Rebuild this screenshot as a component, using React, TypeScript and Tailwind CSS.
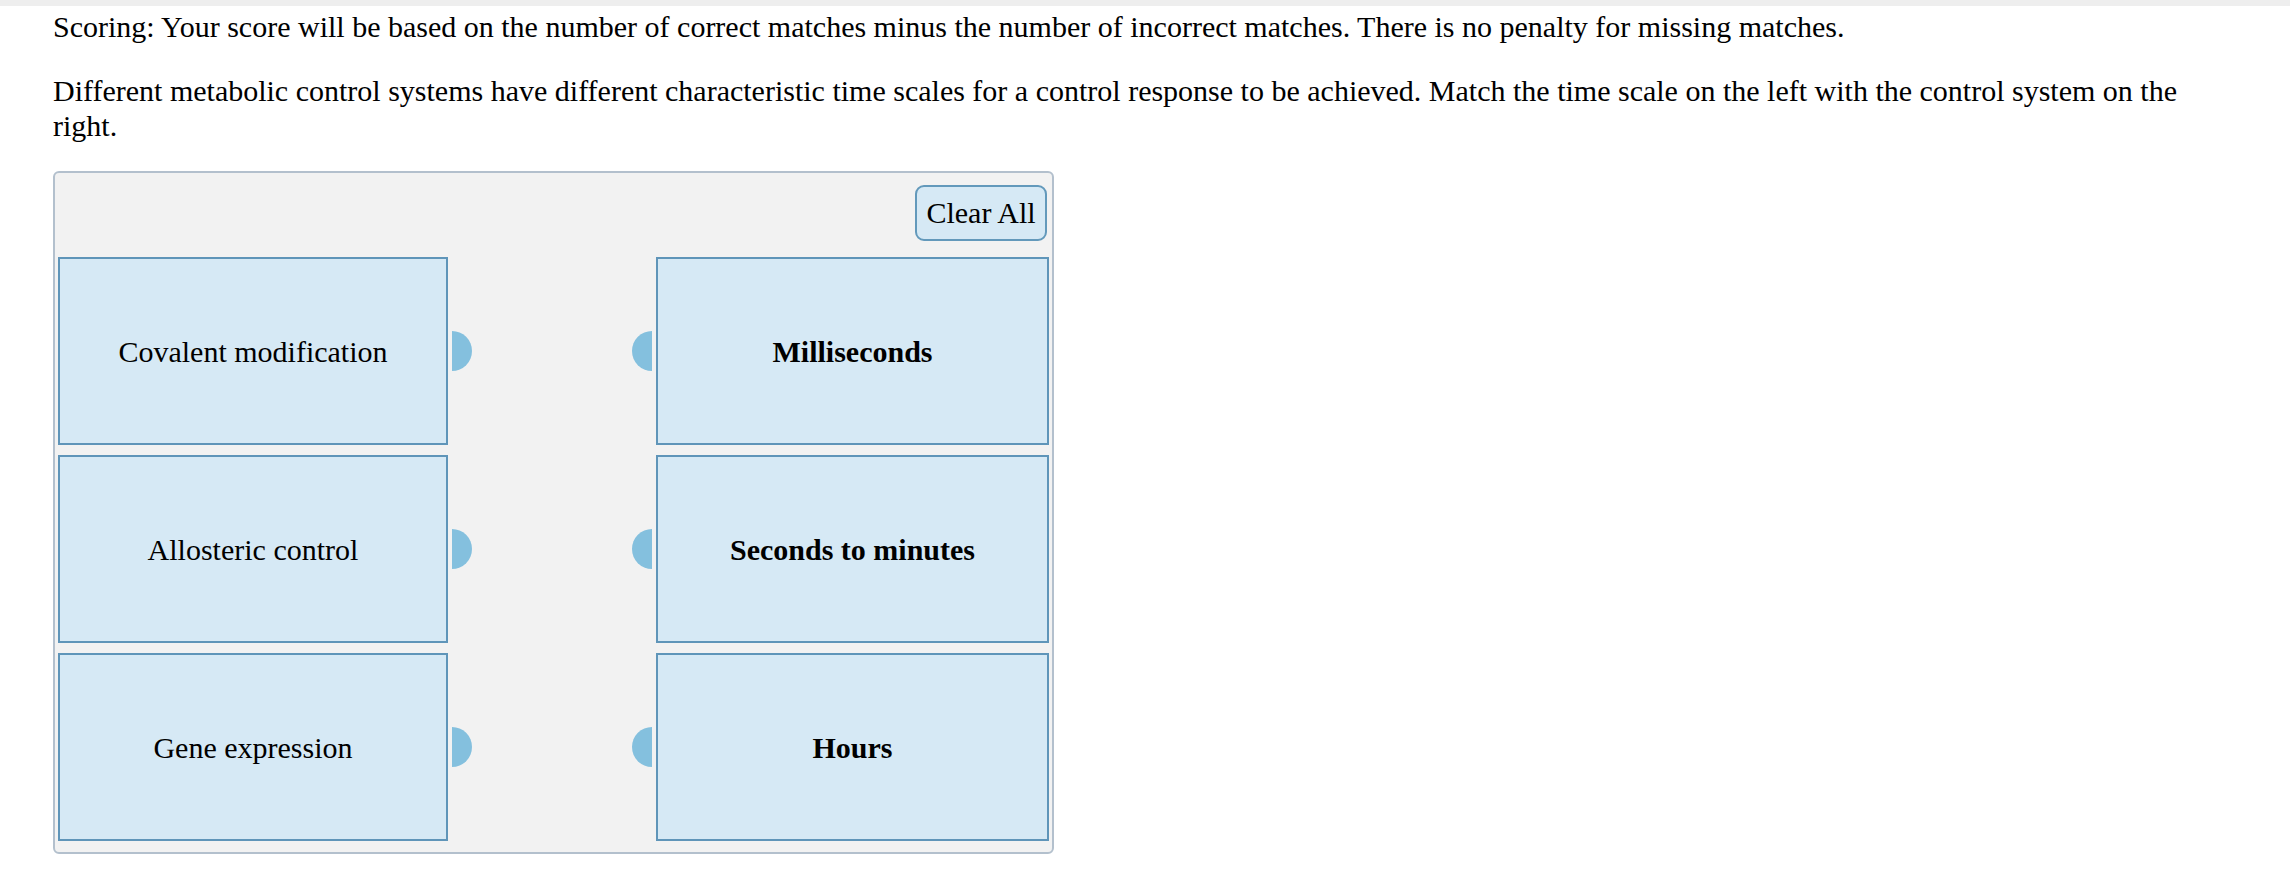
const rows = [
  { left: "Covalent modification", right: "Milliseconds" },
  { left: "Allosteric control", right: "Seconds to minutes" },
  { left: "Gene expression", right: "Hours" },
];

const App = () => {
  return (
    <div className="min-h-screen bg-white text-black font-['Liberation_Serif','Times_New_Roman',serif]">
      <div className="h-[6px] bg-[#eeeeee]" />
      <div className="pl-[53px] pr-[60px]">
        <p className="mt-[3px] text-[30px] leading-[35px]">
          Scoring: Your score will be based on the number of correct matches minus the number of
          incorrect matches. There is no penalty for missing matches.
        </p>
        <p className="mt-[29px] text-[30px] leading-[35px]">
          Different metabolic control systems have different characteristic time scales for a
          control response to be achieved. Match the time scale on the left with the control
          system on the right.
        </p>

        {/* Matching panel */}
        <div className="mt-[28px] w-[1001px] h-[683px] border-2 border-[#b3c0cd] rounded-[6px] bg-[#f2f2f2] pl-[3px] pr-[3px] pt-[12px]">
          <div className="flex justify-end pr-[2px]">
            <button className="w-[132px] h-[56px] rounded-[9px] border-2 border-[#6399bb] bg-[#d6e9f5] text-[30px] leading-none">
              Clear All
            </button>
          </div>

          <div className="mt-[16px] flex flex-col gap-[10px]">
            {rows.map((row) => (
              <div key={row.left} className="flex items-center">
                <div className="w-[390px] h-[188px] border-2 border-[#5f95b9] bg-[#d6e9f5] flex items-center justify-center text-[30px]">
                  {row.left}
                </div>
                <div className="ml-[4px] w-[20px] h-[40px] rounded-r-full bg-[#84c0de]" />
                <div className="flex-1" />
                <div className="mr-[4px] w-[20px] h-[40px] rounded-l-full bg-[#84c0de]" />
                <div className="w-[393px] h-[188px] border-2 border-[#5f95b9] bg-[#d6e9f5] flex items-center justify-center text-[30px] font-bold">
                  {row.right}
                </div>
              </div>
            ))}
          </div>
        </div>
      </div>
    </div>
  );
};

export default App;
